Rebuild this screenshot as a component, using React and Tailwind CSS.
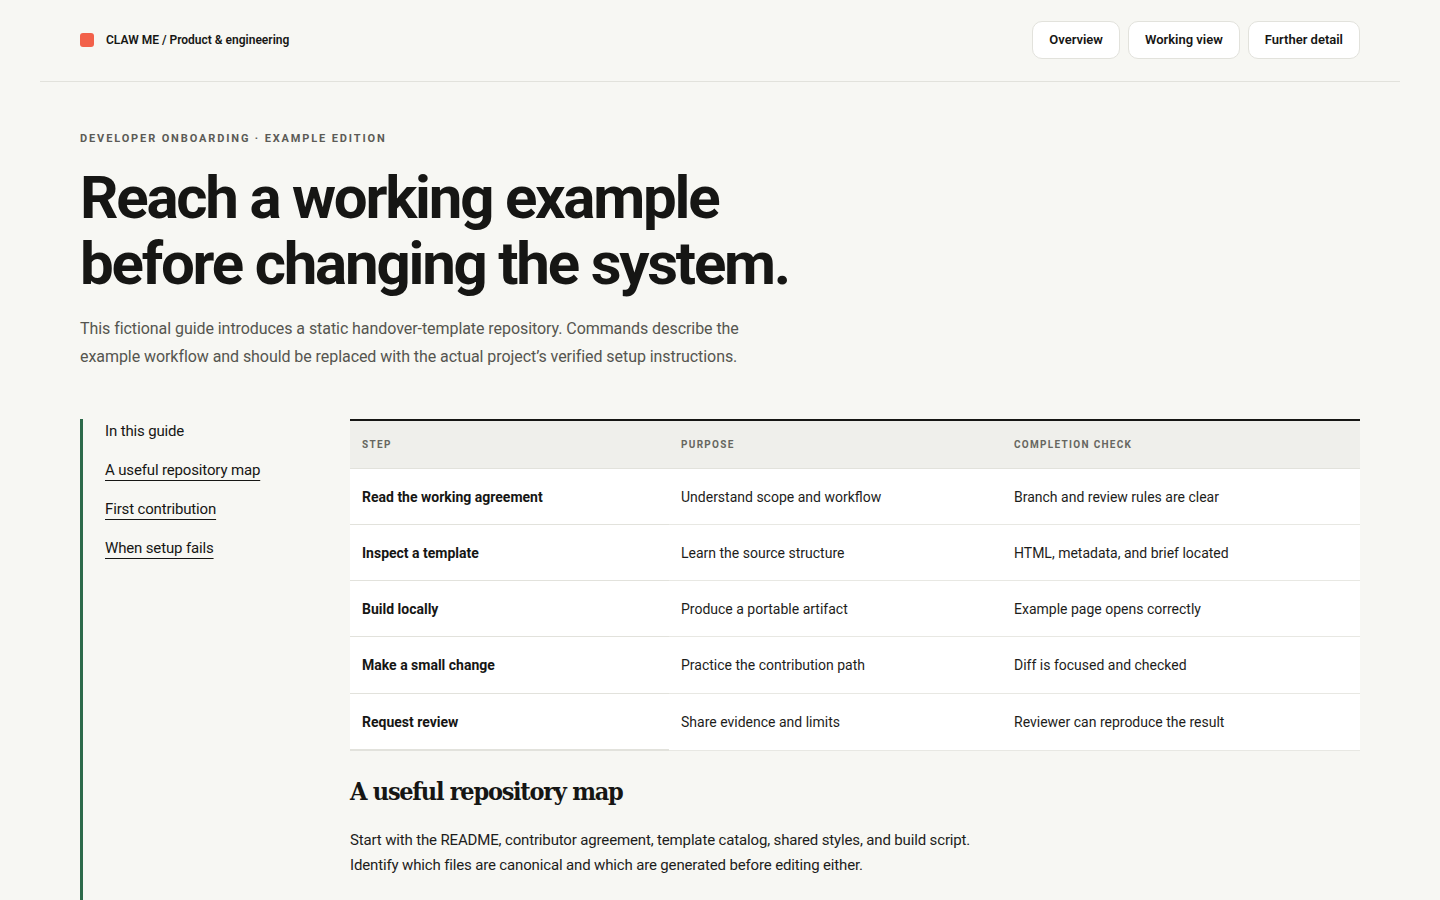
import React from "react";

const rows = [
  ["Read the working agreement", "Understand scope and workflow", "Branch and review rules are clear"],
  ["Inspect a template", "Learn the source structure", "HTML, metadata, and brief located"],
  ["Build locally", "Produce a portable artifact", "Example page opens correctly"],
  ["Make a small change", "Practice the contribution path", "Diff is focused and checked"],
  ["Request review", "Share evidence and limits", "Reviewer can reproduce the result"],
];

const rowHeights = ["h-[56px]", "h-[56px]", "h-[56px]", "h-[57px]", "h-[57px]"];

const sans = { fontFamily: "Roboto, 'Liberation Sans', Arial, sans-serif" };

export default function App() {
  return (
    <div className="min-h-screen bg-[#f7f7f3] text-[#161614]" style={sans}>
      <header className="mx-10 flex h-[82px] items-center justify-between border-b border-[#e2e2dc] px-10 pb-px">
        <div className="flex items-center gap-3">
          <span className="h-[14px] w-[14px] rounded-[3px] bg-[#f2614a]" />
          <span className="text-[12px] font-semibold tracking-[0em] text-[#161614]">
            CLAW ME / Product &amp; engineering
          </span>
        </div>
        <nav className="flex items-center gap-2">
          {["Overview", "Working view", "Further detail"].map((t) => (
            <a
              key={t}
              className="flex h-[38px] items-center rounded-[10px] border border-[#e2e2dc] bg-white px-[16px] text-[13px] font-semibold text-[#161614]"
            >
              {t}
            </a>
          ))}
        </nav>
      </header>

      <main className="px-20 pt-[49px]">
        <p className="text-[11px] font-bold uppercase leading-4 tracking-[0.17em] text-[#5b5b56]">
          Developer onboarding · Example edition
        </p>
        <h1 className="mt-[18px] text-[60px] font-bold leading-[66px] tracking-[-0.037em] text-[#161614]">
          Reach a working example
          <br />
          before changing the system.
        </h1>
        <p className="mt-[18px] text-[16px] leading-[28px] tracking-[-0.004em] text-[#55554f]">
          This fictional guide introduces a static handover-template repository. Commands describe the
          <br />
          example workflow and should be replaced with the actual project’s verified setup instructions.
        </p>

        <div className="mt-12 grid grid-cols-[270px_1010px]">
          <aside className="min-h-[500px] border-l-[3px] border-[#2d6a4a] pl-[22px]">
            <div className="flex flex-col items-start gap-[15px] text-[15px] leading-6 tracking-[-0.01em]">
              <span className="text-[#161614]">In this guide</span>
              {["A useful repository map", "First contribution", "When setup fails"].map((t) => (
                <a
                  key={t}
                  className="text-[#161614] underline decoration-[#161614] decoration-1 underline-offset-[5px]"
                >
                  {t}
                </a>
              ))}
            </div>
          </aside>

          <section>
            <table className="w-full border-collapse border-t-2 border-[#161614] text-left">
              <thead>
                <tr className="h-[48px] bg-[#efefeb] text-[10px] font-bold uppercase tracking-[0.13em] text-[#666660]">
                  <th className="w-[319px] border-b border-[#e2e2dc] px-3 font-bold">Step</th>
                  <th className="w-[333px] border-b border-[#e2e2dc] px-3 font-bold">Purpose</th>
                  <th className="border-b border-[#e2e2dc] px-3 font-bold">Completion check</th>
                </tr>
              </thead>
              <tbody className="bg-white text-[14px] text-[#1d1d1b]">
                {rows.map((r, i) => {
                  const last = i === rows.length - 1;
                  return (
                    <tr key={r[0]} className={rowHeights[i]}>
                      <td
                        className={
                          last
                            ? "border-b-2 border-[#e2e2dc] px-3 pt-[2px] font-bold text-[#161614]"
                            : "border-b border-[#e2e2dc] px-3 pt-[2px] font-bold text-[#161614]"
                        }
                      >
                        {r[0]}
                      </td>
                      <td className="border-b border-[#e8e8e3] px-3 pt-[2px]">{r[1]}</td>
                      <td className="border-b border-[#e8e8e3] px-3 pt-[2px]">{r[2]}</td>
                    </tr>
                  );
                })}
              </tbody>
            </table>

            <h2
              className="mt-[24px] text-[25px] font-bold leading-[34px] tracking-[-0.05em] text-[#161614]"
              style={{ fontFamily: "'DejaVu Serif Condensed', 'DejaVu Serif', serif" }}
            >
              A useful repository map
            </h2>
            <p className="mt-[19px] text-[15px] leading-[25px] tracking-[-0.01em] text-[#1d1d1b]">
              Start with the README, contributor agreement, template catalog, shared styles, and build script.
              <br />
              Identify which files are canonical and which are generated before editing either.
            </p>
          </section>
        </div>
      </main>
    </div>
  );
}
